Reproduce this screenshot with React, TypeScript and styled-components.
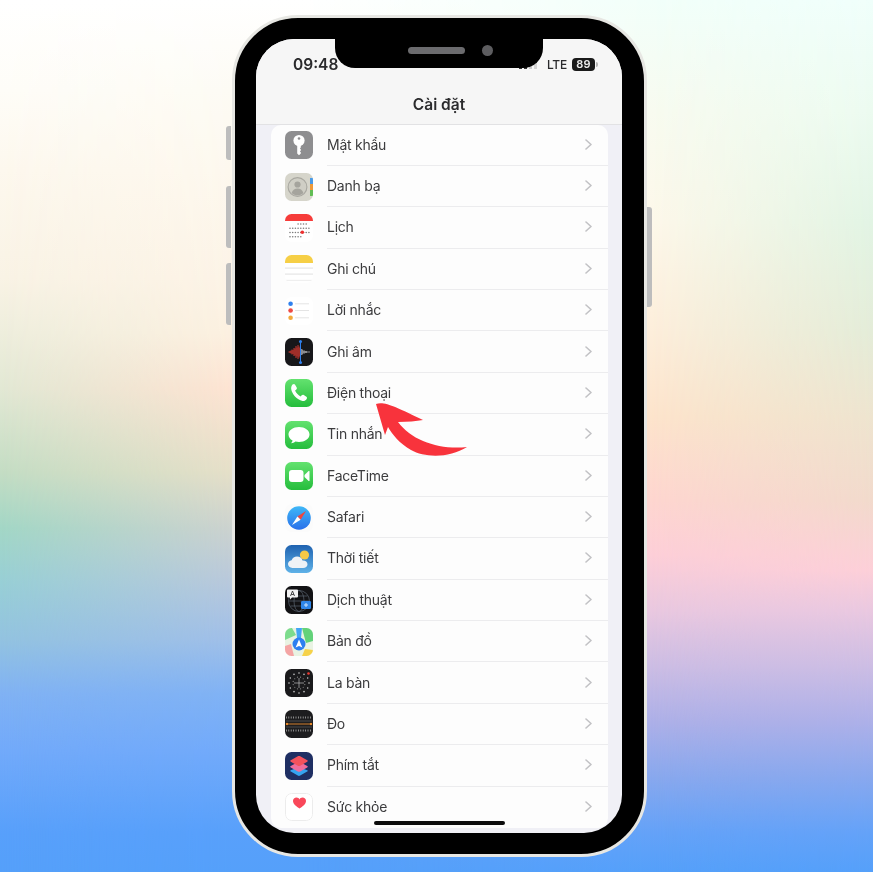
import React from "react";
import styled, { createGlobalStyle } from "styled-components";

const Global = createGlobalStyle`
  html, body { margin: 0; padding: 0; }
  body { font-family: Inter, "Noto Sans", "Liberation Sans", sans-serif; -webkit-font-smoothing: antialiased; }
`;

const Stage = styled.div`
  position: relative;
  width: 873px;
  height: 872px;
  overflow: hidden;
  box-sizing: border-box;
  padding: 15px 0 0 232px;
  background: linear-gradient(180deg, #ffffff 0, #fefdf8 90px, #fdf8ee 170px, #f9f3e5 278px, #eeeedd 333px, #e2e8d4 389px, #c4ddc4 472px, #a3d7c6 528px, #98cfd6 583px, #93c3e0 639px, #80b2f4 694px, #72aafa 750px, #58a0fb 833px, #55a0fa 872px);
`;

const Wash = styled.div<{ $colors: string; $mask: string }>`
  position: absolute;
  inset: 0;
  background: linear-gradient(180deg, ${(p) => p.$colors});
  -webkit-mask-image: linear-gradient(90deg, ${(p) => p.$mask});
  mask-image: linear-gradient(90deg, ${(p) => p.$mask});
`;

const Phone = styled.div`
  position: relative;
  box-sizing: border-box;
  width: 415px;
  height: 842px;
  padding: 21px 22px 21px 21px;
  background: #000;
  border: 3px solid #e7e7e3;
  border-radius: 66px;
  filter: blur(0.45px);
`;

const SideButton = styled.span<{ $side: "left" | "right"; $top: number; $height: number }>`
  position: absolute;
  ${(p) => (p.$side === "left" ? "left: -9px;" : "right: -8px;")}
  top: ${(p) => p.$top}px;
  width: 5px;
  height: ${(p) => p.$height}px;
  background: #bdbdbd;
  border-radius: ${(p) => (p.$side === "left" ? "3px 0 0 3px" : "0 3px 3px 0")};
`;

const Screen = styled.div`
  position: relative;
  display: flex;
  flex-direction: column;
  height: 794px;
  border-radius: 38px;
  overflow: hidden;
  background: #f0f0f6;
`;

const Notch = styled.div`
  position: absolute;
  z-index: 2;
  top: 0;
  left: 79px;
  width: 208px;
  height: 29px;
  background: #000;
  border-radius: 0 0 20px 20px;
  display: flex;
  align-items: flex-start;
  padding: 5px 0 0 73px;
  box-sizing: border-box;
  gap: 17px;
`;

const Speaker = styled.span`
  width: 57px;
  height: 7px;
  margin-top: 3px;
  border-radius: 4px;
  background: #6b6b6e;
`;

const Camera = styled.span`
  width: 11px;
  height: 11px;
  margin-top: 1px;
  border-radius: 50%;
  background: #5d5d60;
`;

const Header = styled.header`
  flex: none;
  height: 85.5px;
  background: #f6f6f6;
  border-bottom: 1px solid #e2e2e4;
  box-sizing: border-box;
  display: flex;
  flex-direction: column;
`;

const StatusBar = styled.div`
  display: flex;
  align-items: center;
  height: 28px;
  margin-top: 11px;
  padding: 0 24px 0 37px;
`;

const Time = styled.span`
  font-size: 15.5px;
  font-weight: 600;
  color: #2a2a2c;
`;

const StatusRight = styled.div`
  margin-left: auto;
  display: flex;
  align-items: center;
  gap: 5px;
`;

const Lte = styled.span`
  font-size: 12px;
  font-weight: 500;
  letter-spacing: -0.2px;
  color: #2a2a2c;
  margin-left: 5px;
`;

const Battery = styled.span`
  width: 23px;
  height: 13px;
  border-radius: 4px;
  background: #1a1a1a;
  color: #ededed;
  font-size: 11px;
  font-weight: 600;
  line-height: 13.5px;
  text-align: center;
  letter-spacing: 0.3px;
`;

const BatteryNub = styled.span`
  width: 2px;
  height: 5px;
  margin-left: -4px;
  border-radius: 0 2px 2px 0;
  background: #b5b5b5;
`;

const Title = styled.h1`
  margin: 17px 0 0;
  font-size: 15.5px;
  line-height: 20px;
  font-weight: 600;
  text-align: center;
  color: #2b2b2d;
`;

const List = styled.ul`
  list-style: none;
  margin: 0 14px 0 15px;
  padding: 0;
  background: #fdfdfd;
  border-radius: 10px;
`;

const Row = styled.li`
  display: flex;
  align-items: center;
  height: 41.375px;
  padding-left: 14px;
  gap: 14px;
`;

const IconBox = styled.span`
  flex: none;
  width: 28px;
  height: 28px;
  border-radius: 6.5px;
  overflow: hidden;
  display: block;
  svg { display: block; }
`;

const RowBody = styled.div<{ $last: boolean }>`
  flex: 1;
  height: 100%;
  display: flex;
  align-items: center;
  justify-content: space-between;
  padding: 0 16px 1px 0;
  box-sizing: border-box;
  border-bottom: ${(p) => (p.$last ? "none" : "1px solid #ececee")};
`;

const Label = styled.span`
  font-size: 14px;
  letter-spacing: -0.25px;
  color: #3c3c3e;
`;

const HomeBar = styled.span`
  position: absolute;
  z-index: 2;
  left: 118px;
  bottom: 8px;
  width: 131px;
  height: 4px;
  border-radius: 3px;
  background: #0c0c0c;
`;

const ArrowMark = styled.svg`
  position: absolute;
  left: 370px;
  top: 398px;
  width: 105px;
  height: 65px;
  filter: blur(0.35px);
`;

const Ico = ({ children }: { children: React.ReactNode }) => (
  <IconBox>
    <svg width="28" height="28" viewBox="0 0 28 28">{children}</svg>
  </IconBox>
);

const KeyIcon = () => (
  <Ico>
    <rect width="28" height="28" fill="#8e8e90" />
    <circle cx="14" cy="9.500" r="5.600" fill="#fff" />
    <circle cx="14" cy="7.500" r="1.300" fill="#8e8e90" />
    <path d="M12.200 13h3.600v3.500l-.9.900.9.900v1.200l-.9.900.9.900v1.200L14 24.300l-1.800-1.800z" fill="#fff" />
  </Ico>
);

const ContactsIcon = () => (
  <Ico>
    <rect width="28" height="28" fill="#d6d5cb" />
    <rect x="25" y="5" width="3" height="6" fill="#4a9be8" />
    <rect x="25" y="11" width="3" height="6" fill="#ee9a3a" />
    <rect x="25" y="17" width="3" height="6" fill="#62bd55" />
    <circle cx="12.500" cy="14" r="9.400" fill="#cfcec5" stroke="#a9a8a1" strokeWidth="1.100" />
    <circle cx="12.500" cy="11.500" r="3.100" fill="#a5a49d" />
    <path d="M6.600 20c1-3.400 3.400-4.600 5.900-4.600s5 1.200 5.900 4.600c-1.600 1.500-3.600 2.300-5.900 2.300s-4.300-.8-5.900-2.300z" fill="#a5a49d" />
  </Ico>
);

const calRows = [
  { y: 10, from: 11, to: 22 },
  { y: 14.300, from: 5, to: 24 },
  { y: 18.500, from: 5, to: 24 },
  { y: 22.700, from: 5, to: 18 },
];
const calDots: number[][] = [];
calRows.forEach((r) => {
  for (let x = 5; x <= 24; x += 2.700) if (x >= r.from - 0.1 && x <= r.to) calDots.push([x, r.y]);
});

const CalendarIcon = () => (
  <Ico>
    <rect width="28" height="28" fill="#fff" />
    <rect width="28" height="7" fill="#f63c3a" />
    {calDots.map(([x, y]) => (
      <circle key={`${x}-${y}`} cx={x} cy={y} r="0.800" fill="#7c7c7c" />
    ))}
    <circle cx="17.300" cy="18.300" r="1.800" fill="#ef2f2f" />
  </Ico>
);

const NotesIcon = () => (
  <Ico>
    <rect width="28" height="28" fill="#fff" />
    <rect width="28" height="8" fill="#f6cf46" />
    <rect y="12.500" width="28" height="1.200" fill="#e6e6e6" />
    <rect y="18.500" width="28" height="1.200" fill="#e6e6e6" />
    <rect y="24.800" width="28" height="1.200" fill="#efefef" />
  </Ico>
);

const RemindersIcon = () => (
  <Ico>
    <rect width="28" height="28" fill="#fff" />
    <circle cx="5.600" cy="6.800" r="2.300" fill="#2f80ee" />
    <circle cx="5.600" cy="13.500" r="2.300" fill="#ee4a44" />
    <circle cx="5.600" cy="20.800" r="2.300" fill="#f2a93b" />
    <path d="M10 6.800h14M10 13.500h14M10 20.800h14" stroke="#e4e4e4" strokeWidth="1" />
  </Ico>
);

const redWave = [1, 2, 3, 5, 4, 8, 7, 12, 9, 14, 11, 8];
const greyWave = [6, 5, 3, 3, 2, 2, 1, 1, 1];

const VoiceIcon = () => (
  <Ico>
    <rect width="28" height="28" fill="#17171a" />
    {redWave.map((h, i) => (
      <rect key={i} x={3.500 + i} y={14 - h / 2} width="1" height={h} fill="#cb362e" />
    ))}
    {greyWave.map((h, i) => (
      <rect key={i} x={16 + i} y={14 - h / 2} width="1" height={h} fill="#8b8b8f" />
    ))}
    <path d="M15.500 3v22" stroke="#2f80ee" strokeWidth="1" />
    <circle cx="15.500" cy="3.500" r="1.500" fill="#2f80ee" />
    <circle cx="15.500" cy="24.500" r="1.500" fill="#2f80ee" />
  </Ico>
);

const greenDefs = (id: string) => (
  <defs>
    <linearGradient id={id} x1="0" y1="0" x2="0" y2="1">
      <stop offset="0" stopColor="#63e26f" />
      <stop offset="1" stopColor="#25bd3c" />
    </linearGradient>
  </defs>
);

const PhoneIcon = () => (
  <Ico>
    {greenDefs("gp")}
    <rect width="28" height="28" fill="url(#gp)" />
    <path d="M7.500 5.500c1-.8 2-.8 2.600.2l1.600 2.700c.4.800.2 1.500-.4 2l-1.200 1c.8 2.200 3 4.700 5.500 6l1.100-1.200c.6-.6 1.400-.7 2.100-.2l2.600 1.800c.8.600.8 1.600.1 2.500-1 1.300-2.400 2-4 1.700-5.600-1.100-10.600-7-11.300-12-.2-1.900.4-3.400 1.300-4.500z" fill="#fff" />
  </Ico>
);

const MessagesIcon = () => (
  <Ico>
    {greenDefs("gm")}
    <rect width="28" height="28" fill="url(#gm)" />
    <path d="M14 6c-5.800 0-10.500 3.300-10.500 7.500 0 2.600 1.600 4.800 4.100 6.100-.2 1-.8 1.900-1.600 2.600 1.700 0 3.200-.6 4.400-1.600 1.100.3 2.400.4 3.600.4 5.800 0 10.500-3.300 10.500-7.500S19.800 6 14 6z" fill="#fff" />
  </Ico>
);

const FaceTimeIcon = () => (
  <Ico>
    {greenDefs("gf")}
    <rect width="28" height="28" fill="url(#gf)" />
    <rect x="4" y="8" width="14.500" height="12" rx="3" fill="#fff" />
    <path d="M19.500 13l4.100-3.900c.5-.4.900-.2.900.4v9c0 .6-.4.800-.9.400L19.500 15z" fill="#fff" />
  </Ico>
);

const SafariIcon = () => (
  <Ico>
    <defs>
      <linearGradient id="gs" x1="0" y1="0" x2="0" y2="1">
        <stop offset="0" stopColor="#3fb8f7" />
        <stop offset="1" stopColor="#2a70ea" />
      </linearGradient>
    </defs>
    <rect width="28" height="28" fill="#fbfbfb" />
    <circle cx="14" cy="14" r="11.800" fill="url(#gs)" />
    <path d="M21 7l-8.600 5.500 3.200 3.200z" fill="#f1453d" />
    <path d="M7 21l5.400-8.500 3.200 3.200z" fill="#fff" />
  </Ico>
);

const WeatherIcon = () => (
  <Ico>
    <defs>
      <linearGradient id="gw" x1="0" y1="0" x2="0" y2="1">
        <stop offset="0" stopColor="#1f62b0" />
        <stop offset="1" stopColor="#5fb2e8" />
      </linearGradient>
    </defs>
    <rect width="28" height="28" fill="url(#gw)" />
    <circle cx="19.500" cy="10" r="4.600" fill="#f7c948" />
    <path d="M7.500 23c-2.600 0-4.500-1.700-4.500-3.900 0-2 1.500-3.600 3.600-3.800.7-2.300 2.900-3.800 5.400-3.800 2.700 0 4.800 1.600 5.500 3.900 2.800-.2 5 1.400 5 3.800 0 2.200-1.900 3.800-4.400 3.800z" fill="#eef2f6" />
  </Ico>
);

const TranslateIcon = () => (
  <Ico>
    <rect width="28" height="28" fill="#121214" />
    <circle cx="14" cy="15" r="10.500" fill="none" stroke="#5a6470" strokeWidth="0.700" />
    <ellipse cx="14" cy="15" rx="5" ry="10.500" fill="none" stroke="#5a6470" strokeWidth="0.700" />
    <path d="M4 15h20M5.500 10h17M5.500 20h17" stroke="#5a6470" strokeWidth="0.700" />
    <path d="M3 3.500h9a1 1 0 011 1v6a1 1 0 01-1 1H7l-2 2v-2H3a1 1 0 01-1-1v-6a1 1 0 011-1z" fill="#f2f2f2" />
    <rect x="16" y="15" width="10" height="8" rx="1.200" fill="#2f86e8" />
    <path d="M19 19h4M21 17v4" stroke="#cfe4fb" strokeWidth="1" />
    <path d="M5.500 10l2-5 2 5M6.300 8.500h2.500" stroke="#222" strokeWidth="0.800" fill="none" />
  </Ico>
);

const MapsIcon = () => (
  <Ico>
    <rect width="28" height="28" fill="#e9f3e3" />
    <path d="M17 0h11v13l-7 2z" fill="#63d27a" />
    <path d="M0 0h7l4 7-11 5z" fill="#7ddc8d" />
    <path d="M0 18l6-2 3 12H0z" fill="#f5a5a5" />
    <path d="M17 28l3-7 8 1v6z" fill="#f6d24a" />
    <path d="M11 0h6l-1 10h-4z" fill="#43a6f5" />
    <circle cx="14" cy="16" r="6.500" fill="#2d7ff0" />
    <path d="M14 11.500l3.400 8-3.400-1.500-3.400 1.500z" fill="#fff" />
  </Ico>
);

const ticks = Array.from({ length: 12 }, (_, i) => {
  const a = (i * Math.PI) / 6;
  return [14 + 10 * Math.cos(a), 14 + 10 * Math.sin(a), 14 + 6 * Math.cos(a + 0.26), 14 + 6 * Math.sin(a + 0.26)];
});

const CompassIcon = () => (
  <Ico>
    <rect width="28" height="28" fill="#1a1a1c" />
    {ticks.map(([a, b, c, d]) => (
      <g key={`${a}-${b}`}>
        <circle cx={a} cy={b} r="0.800" fill="#c9c9c9" />
        <circle cx={c} cy={d} r="0.600" fill="#8d8d8d" />
      </g>
    ))}
    <path d="M14 9v10M9 14h10" stroke="#bdbdbd" strokeWidth="0.700" />
    <circle cx="23.500" cy="4.500" r="1.300" fill="#ef3b33" />
  </Ico>
);

const MeasureIcon = () => (
  <Ico>
    <rect width="28" height="28" fill="#1d1d1f" />
    <path d="M1 7.500h26M1 20.500h26" stroke="#a8a8a8" strokeWidth="2" strokeDasharray="0.800 1.600" />
    <path d="M1 11h26M1 17h26" stroke="#4b4b4d" strokeWidth="1" />
    <path d="M1 14h26" stroke="#e98b2c" strokeWidth="0.900" />
    <circle cx="2" cy="14" r="1.200" fill="#e98b2c" />
    <circle cx="26" cy="14" r="1.200" fill="#e98b2c" />
  </Ico>
);

const ShortcutsIcon = () => (
  <Ico>
    <rect width="28" height="28" fill="#1f2f63" />
    <path d="M14 15l-8.200 3.200c-.8.300-.8 1 0 1.400l7 4c.8.500 1.600.5 2.400 0l7-4c.8-.4.800-1.100 0-1.400z" fill="#35a4f0" />
    <path d="M14 9.500L5.800 14c-.8.400-.8 1 0 1.400l7 4c.8.500 1.600.5 2.400 0l7-4c.8-.4.800-1 0-1.400z" fill="#ef6d9c" />
    <path d="M12.800 4.300l-7 4c-.8.400-.8 1 0 1.400l7 4c.8.500 1.600.5 2.400 0l7-4c.8-.4.800-1 0-1.400l-7-4c-.8-.4-1.600-.4-2.400 0z" fill="#f4525c" />
  </Ico>
);

const HealthIcon = () => (
  <Ico>
    <rect x="0.500" y="0.500" width="27" height="27" rx="6" fill="#fff" stroke="#ececec" />
    <path d="M17.500 4.500c-1.300 0-2.600.7-3 1.900-.5-1.200-1.700-1.900-3-1.900-2 0-3.500 1.500-3.500 3.400 0 3 3.500 5.500 6.500 7.600 3-2.100 6.500-4.600 6.500-7.600 0-1.900-1.500-3.400-3.500-3.400z" fill="#f9485a" />
  </Ico>
);

const Chevron = () => (
  <svg width="7" height="11" viewBox="0 0 7 11">
    <path d="M1 1l5 4.500L1 10" fill="none" stroke="#c2c2c5" strokeWidth="1.600" strokeLinecap="round" strokeLinejoin="round" />
  </svg>
);

const Signal = () => (
  <svg width="18" height="10" viewBox="0 0 18 10">
    <rect x="0" y="7" width="3" height="3" fill="#333" />
    <rect x="5" y="5" width="3" height="5" fill="#333" />
    <rect x="10" y="3" width="3" height="7" fill="#c9c9c9" />
    <rect x="15" y="1" width="3" height="9" fill="#d4d4d4" />
  </svg>
);

const rows: { label: string; icon: React.FC }[] = [
  { label: "Mật khẩu", icon: KeyIcon },
  { label: "Danh bạ", icon: ContactsIcon },
  { label: "Lịch", icon: CalendarIcon },
  { label: "Ghi chú", icon: NotesIcon },
  { label: "Lời nhắc", icon: RemindersIcon },
  { label: "Ghi âm", icon: VoiceIcon },
  { label: "Điện thoại", icon: PhoneIcon },
  { label: "Tin nhắn", icon: MessagesIcon },
  { label: "FaceTime", icon: FaceTimeIcon },
  { label: "Safari", icon: SafariIcon },
  { label: "Thời tiết", icon: WeatherIcon },
  { label: "Dịch thuật", icon: TranslateIcon },
  { label: "Bản đồ", icon: MapsIcon },
  { label: "La bàn", icon: CompassIcon },
  { label: "Đo", icon: MeasureIcon },
  { label: "Phím tắt", icon: ShortcutsIcon },
  { label: "Sức khỏe", icon: HealthIcon },
];

const innerLeft = "#ffffff 0, #fdfbf4 90px, #fdf8ee 170px, #fcf3e6 278px, #fcf0e0 333px, #fde3d2 389px, #e5dfc8 472px, #ccd2cf 528px, #b8c8dc 583px, #a0bfe8 639px, #80b2f4 694px, #72aafa 750px, #58a0fb 833px, #55a0fa 872px";
const innerRight = "#f2fffa 0, #f8fbf0 111px, #fdf8ea 222px, #fdeedb 333px, #fde4cc 417px, #fed6d0 500px, #fdcfd8 555px, #e9c8e0 611px, #ccbde4 667px, #adb0e8 722px, #88a8ee 778px, #64a2f8 833px, #55a0fa 872px";
const outerRight = "#f0fffb 0, #ecfbf0 111px, #e2f4e4 222px, #e4ecd8 333px, #eee4cf 417px, #f2dacc 500px, #fdcfd8 570px, #e9c8e0 611px, #ccbde4 667px, #adb0e8 722px, #88a8ee 778px, #64a2f8 833px, #55a0fa 872px";

export default function App() {
  return (
    <Stage>
      <Global />
      <Wash $colors={innerLeft} $mask="transparent 0, #000 232px" />
      <Wash $colors={innerRight} $mask="transparent 300px, #000 650px" />
      <Wash $colors={outerRight} $mask="transparent 650px, #000 873px" />
      <Phone>
        <SideButton $side="left" $top={108} $height={34} />
        <SideButton $side="left" $top={168} $height={62} />
        <SideButton $side="left" $top={245} $height={62} />
        <SideButton $side="right" $top={189} $height={100} />
        <Screen>
          <Notch>
            <Speaker />
            <Camera />
          </Notch>
          <Header>
            <StatusBar>
              <Time>09:48</Time>
              <StatusRight>
                <Signal />
                <Lte>LTE</Lte>
                <Battery>89</Battery>
                <BatteryNub />
              </StatusRight>
            </StatusBar>
            <Title>Cài đặt</Title>
          </Header>
          <List>
            {rows.map((r, i) => (
              <Row key={r.label}>
                <r.icon />
                <RowBody $last={i === rows.length - 1}>
                  <Label>{r.label}</Label>
                  <Chevron />
                </RowBody>
              </Row>
            ))}
          </List>
          <HomeBar />
        </Screen>
      </Phone>
      <ArrowMark viewBox="370 398 105 65">
        <path d="M376 404C384 401 396 407 423 420C416 421 408 422 398 422C412 441 440 450 467 447C450 458 425 458 411 450C400 444 392 434 388 427L385 435Z" fill="#f8333c" />
      </ArrowMark>
    </Stage>
  );
}
